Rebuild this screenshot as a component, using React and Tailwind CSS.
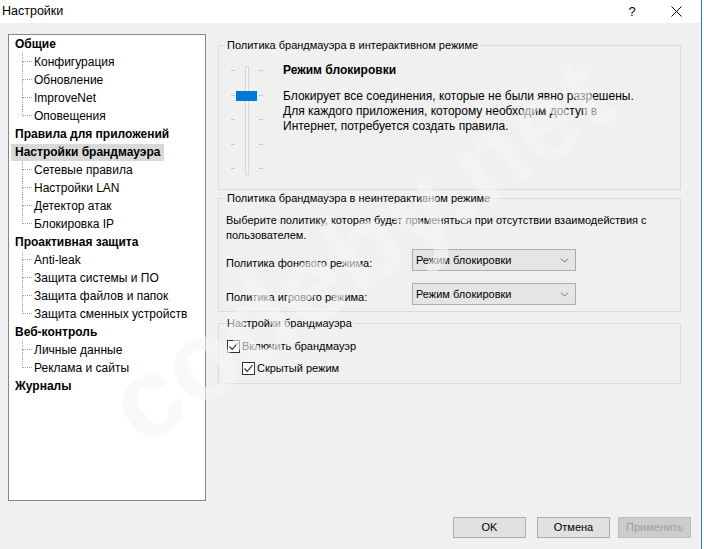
import { ChevronDown } from 'lucide-react';

const tree = [
  { title: 'Общие', items: ['Конфигурация', 'Обновление', 'ImproveNet', 'Оповещения'] },
  { title: 'Правила для приложений', items: [] },
  { title: 'Настройки брандмауэра', items: ['Сетевые правила', 'Настройки LAN', 'Детектор атак', 'Блокировка IP'], selected: true },
  { title: 'Проактивная защита', items: ['Anti-leak', 'Защита системы и ПО', 'Защита файлов и папок', 'Защита сменных устройств'] },
  { title: 'Веб-контроль', items: ['Личные данные', 'Реклама и сайты'] },
  { title: 'Журналы', items: [] },
];

function TreeChild({ label, last }) {
  return (
    <div className="flex h-[18px] items-center">
      <div className="ml-[13px] flex h-full w-[10px] flex-col">
        <div className="h-[9px] border-b border-l border-dotted border-[#a0a0a0]" />
        <div className={last ? 'flex-1' : 'flex-1 border-l border-dotted border-[#a0a0a0]'} />
      </div>
      <span className="ml-[2px]">{label}</span>
    </div>
  );
}

function Select() {
  return (
    <div className="flex h-[22px] w-[164px] items-center justify-between border border-[#adadad] bg-[#e5e5e5] pl-[3px] pr-[4px]">
      <span>Режим блокировки</span>
      <ChevronDown size={13} strokeWidth={1.5} className="text-[#555]" />
    </div>
  );
}

function Check({ label, className }) {
  return (
    <div className={`flex h-[14px] items-center gap-[2px] ${className}`}>
      <div className="flex h-[13px] w-[13px] items-center justify-center border border-[#333] bg-white">
        <svg width="11" height="11" viewBox="0 0 11 11">
          <path d="M1.5 5.5 L4.2 8.3 L9.6 2.2" fill="none" stroke="#333" strokeWidth="1.2" />
        </svg>
      </div>
      <span>{label}</span>
    </div>
  );
}

function Slider() {
  const ticks = [7, 32, 56, 81, 105];
  return (
    <svg width="40" height="115" viewBox="0 0 40 115" className="shrink-0">
      {ticks.map((y) => (
        <g key={y} stroke="#c8c8c8" strokeWidth="1">
          <line x1="3" y1={y + 0.5} x2="7" y2={y + 0.5} />
          <line x1="31" y1={y + 0.5} x2="35" y2={y + 0.5} />
        </g>
      ))}
      <rect x="17.5" y="3.5" width="3" height="108" fill="#f4f4f4" stroke="#d6d6d6" />
      <rect x="8" y="28" width="21" height="10" fill="#0078d7" />
    </svg>
  );
}

function Button({ children, disabled }) {
  return (
    <div
      className={`flex h-[21px] w-[73px] items-center justify-center border ${
        disabled ? 'border-[#bfbfbf] bg-[#cccccc] text-[#a0a0a0]' : 'border-[#adadad] bg-[#e1e1e1] text-black'
      }`}
    >
      {children}
    </div>
  );
}

export default function App() {
  return (
    <div
      className="relative h-[549px] w-[704px] overflow-hidden bg-white text-[11px] text-black"
      style={{ fontFamily: '"Liberation Sans", Arial, sans-serif' }}
    >
      <div className="flex h-full w-[702px] flex-col border-r border-[#1883d7]">
        {/* Title bar */}
        <div className="flex h-[23px] shrink-0 items-center bg-white pl-[2px]">
          <span className="text-[12.5px]">Настройки</span>
          <span className="ml-auto w-[10px] text-center text-[13px]">?</span>
          <svg width="11" height="11" viewBox="0 0 11 11" className="ml-[34px] mr-[19px]">
            <path d="M0.5 0.5 L10.5 10.5 M10.5 0.5 L0.5 10.5" stroke="#000" strokeWidth="1" />
          </svg>
        </div>

        {/* Body */}
        <div className="flex flex-1 flex-col bg-[#f0f0f0]">
          <div className="flex pt-[11px]">
            {/* Tree */}
            <div className="ml-[8px] h-[467px] w-[198px] border border-[#828790] bg-white text-[12px]">
              {tree.map((node) => (
                <div key={node.title}>
                  <div className="flex h-[18px] items-center">
                    <span
                      className={`ml-[2px] px-[4px] font-bold leading-[17px] ${node.selected ? 'bg-[#d9d9d9]' : ''}`}
                    >
                      {node.title}
                    </span>
                  </div>
                  {node.items.map((it, i) => (
                    <TreeChild key={it} label={it} last={i === node.items.length - 1} />
                  ))}
                </div>
              ))}
            </div>

            {/* Right side */}
            <div className="ml-[12px] flex w-[463px] flex-col pt-[4px]">
              <fieldset className="h-[152px] border border-[#dcdcdc]">
                <legend className="ml-[6px] px-[2px] leading-[15px]">
                  Политика брандмауэра в интерактивном режиме
                </legend>
                <div className="flex pl-[9px] pt-[10px]">
                  <Slider />
                  <div className="ml-[15px] flex flex-col text-[12px] leading-[15px]">
                    <div className="font-bold">Режим блокировки</div>
                    <div className="mt-[11px] w-[355px]">
                      Блокирует все соединения, которые не были явно разрешены. Для каждого приложения, которому
                      необходим доступ в Интернет, потребуется создать правила.
                    </div>
                  </div>
                </div>
              </fieldset>

              <fieldset className="mt-[1px] h-[121px] border border-[#dcdcdc]">
                <legend className="ml-[6px] px-[2px] leading-[15px]">
                  Политика брандмауэра в неинтерактивном режиме
                </legend>
                <div className="w-[435px] px-[7px] pt-[7px] leading-[15px]">
                  Выберите политику, которая будет применяться при отсутствии взаимодействия с пользователем.
                </div>
                <div className="mt-[6px] flex items-start pl-[7px]">
                  <span className="w-[186px] pt-[7px] leading-[15px]">Политика фонового режима:</span>
                  <Select />
                </div>
                <div className="mt-[12px] flex items-start pl-[7px]">
                  <span className="w-[186px] pt-[7px] leading-[15px]">Политика игрового режима:</span>
                  <Select />
                </div>
              </fieldset>

              <fieldset className="mt-[4px] h-[68px] border border-[#dcdcdc]">
                <legend className="ml-[6px] px-[2px] leading-[15px]">Настройки брандмауэра</legend>
                <Check label="Включить брандмауэр" className="ml-[8px] mt-[8px]" />
                <Check label="Скрытый режим" className="ml-[23px] mt-[8px]" />
              </fieldset>
            </div>
          </div>

          {/* Buttons */}
          <div className="mt-[16px] flex gap-[11px] pl-[453px]">
            <Button>OK</Button>
            <Button>Отмена</Button>
            <div className="-ml-[3px]">
              <Button disabled>Применить</Button>
            </div>
          </div>
        </div>
      </div>

      {/* Watermark */}
      <div
        className="pointer-events-none absolute left-[360px] top-[250px] select-none whitespace-nowrap text-[112px] font-bold leading-none text-[#f6f6f6] opacity-60"
        style={{ fontFamily: '"Liberation Sans", sans-serif', transform: 'translate(-50%, -50%) rotate(-35deg)' }}
      >
        codeby.net
      </div>
    </div>
  );
}
